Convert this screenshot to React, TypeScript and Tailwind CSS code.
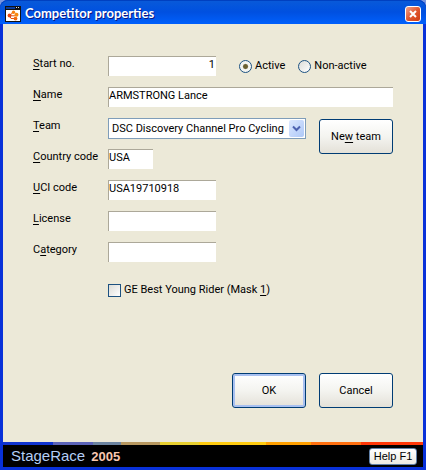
import type { ReactNode } from 'react';
import { useState } from 'react';

const BUTTON =
  'h-[35px] w-[74px] rounded-[3px] border border-[#003c74] bg-linear-to-b from-white via-[#f4f4f0] to-[#e4e1d8] pt-[2px] text-center';
const FIELD =
  'h-5 border-0 border-t border-l border-[#aca899] bg-white pb-1 leading-4 outline-none';

function Key({ children }: { children: ReactNode }) {
  return <span className="underline underline-offset-2">{children}</span>;
}

function Label({ id, children }: { id: string; children: ReactNode }) {
  return (
    <label htmlFor={id} className="col-start-1 leading-4 whitespace-nowrap">
      {children}
    </label>
  );
}

function AppIcon() {
  return (
    <svg width="16" height="16" viewBox="0 0 16 16" aria-hidden="true">
      <rect width="16" height="16" fill="#111" />
      <rect x="1" y="1" width="9" height="2" fill="#0a3a98" />
      <path d="M11 1h1v1h-1zM13 1h1v1h-1z" fill="#ddd" />
      <rect x="1" y="4" width="14" height="11" fill="#fff" />
      <path d="M8 6.5 4.5 9.5 6 12.5h4M5 9.8h5" stroke="#e05010" fill="none" />
      <circle cx="8.5" cy="6.3" r="1.7" fill="#f88010" />
      <circle cx="4.5" cy="9.5" r="1.9" fill="#e84810" />
      <circle cx="11.5" cy="8.8" r="2" fill="#f88a10" />
      <circle cx="10.5" cy="12.6" r="1.9" fill="#f06810" />
    </svg>
  );
}

function Radio({ label, checked, onChange }: { label: string; checked: boolean; onChange: () => void }) {
  return (
    <label className="flex items-center gap-[3px] whitespace-nowrap">
      <input
        type="radio"
        name="status"
        checked={checked}
        onChange={onChange}
        className="size-[13px] appearance-none rounded-full border border-[#1c5180] bg-white bg-linear-to-br from-[#dcdcd7] to-white checked:bg-radial checked:from-[#6b5f30] checked:from-25% checked:to-[#f4f4f0] checked:to-40%"
      />
      {label}
    </label>
  );
}

export default function App() {
  const [active, setActive] = useState(true);
  return (
    <div className="flex min-h-screen flex-col bg-[#7a96df] font-['Roboto',sans-serif] text-[11px] text-black">
      <div className="flex grow flex-col rounded-t-lg bg-[#0831d9]">
        <header className="flex h-6 shrink-0 items-center rounded-t-lg bg-linear-to-b from-[#0a5ad8] via-[#0050e0] to-[#0060fc] px-[5px] pt-[3px] shadow-[inset_0_1px_0_#0040c0]">
          <AppIcon />
          <h1 className="grow pl-1 font-['Lato',sans-serif] text-[13px] font-bold whitespace-nowrap text-white [text-shadow:1px_1px_#0a1883]">
            Competitor properties
          </h1>
          <button
            type="button"
            aria-label="Close"
            className="flex size-4 items-center justify-center rounded-[3px] border border-white bg-linear-to-br from-[#f0a088] via-[#e05830] to-[#d03c10]"
          >
            <svg width="8" height="8" viewBox="0 0 8 8" aria-hidden="true">
              <path d="M1 1l6 6M7 1 1 7" stroke="#fff" strokeWidth="2" />
            </svg>
          </button>
        </header>

        <main className="mx-[3px] mb-[3px] flex grow flex-col bg-[#ece9d8]">
          <form className="flex grow flex-col" onSubmit={(e) => e.preventDefault()}>
            <div className="grid auto-rows-[31px] grid-cols-[75px_198px_1fr] items-start px-[30px] pt-8">
              <Label id="start"><Key>S</Key>tart no.</Label>
              <div className="col-span-2 flex items-center">
                <input id="start" defaultValue="1" className={`${FIELD} w-[108px] pr-px text-right`} />
                <div className="flex gap-[13px] pl-[23px]">
                  <Radio label="Active" checked={active} onChange={() => setActive(true)} />
                  <Radio label="Non-active" checked={!active} onChange={() => setActive(false)} />
                </div>
              </div>
              <Label id="name"><Key>N</Key>ame</Label>
              <input id="name" defaultValue="ARMSTRONG Lance" className={`${FIELD} col-span-2 w-full`} />
              <Label id="team"><Key>T</Key>eam</Label>
              <div className="relative">
                <select
                  id="team"
                  className="h-[21px] w-full appearance-none border border-[#7f9db9] bg-white pt-[2px] pl-[3px] outline-none"
                >
                  <option>DSC Discovery Channel Pro Cycling</option>
                </select>
                <span className="pointer-events-none absolute top-[2px] right-[2px] flex h-[17px] w-[15px] items-center justify-center rounded-[2px] bg-linear-to-br from-[#dce8ff] to-[#aec8f7]">
                  <svg width="9" height="7" viewBox="0 0 9 7" aria-hidden="true">
                    <path d="m1 1.5 3.5 3.5L8 1.5" stroke="#4d62b0" strokeWidth="2" fill="none" />
                  </svg>
                </span>
              </div>
              <button type="button" className={`${BUTTON} row-span-2 mt-px justify-self-end`}>
                Ne<Key>w</Key> team
              </button>
              <Label id="country"><Key>C</Key>ountry code</Label>
              <input id="country" defaultValue="USA" className={`${FIELD} w-[45px]`} />
              <Label id="uci"><Key>U</Key>CI code</Label>
              <input id="uci" defaultValue="USA19710918" className={`${FIELD} w-[108px]`} />
              <Label id="license"><Key>L</Key>icense</Label>
              <input id="license" className={`${FIELD} col-start-2 w-[108px]`} />
              <Label id="category">C<Key>a</Key>tegory</Label>
              <input id="category" className={`${FIELD} col-start-2 w-[108px]`} />
              <label className="col-span-2 col-start-2 flex items-center gap-[3px] pt-[9px]">
                <input
                  type="checkbox"
                  className="size-[13px] appearance-none border border-[#1c5180] bg-linear-to-br from-[#dcdcd7] to-white checked:bg-[#21a121]"
                />
                <span>GE Best Young Rider (Mask <Key>1</Key>)</span>
              </label>
            </div>

            <div className="mt-auto flex justify-end gap-[13px] px-[30px] pb-[34px]">
              <button type="submit" className={`${BUTTON} shadow-[inset_0_0_0_2px_#a8c0f0]`}>
                OK
              </button>
              <button type="button" className={BUTTON}>Cancel</button>
            </div>
          </form>

          <footer>
            <div className="grid h-[3px] grid-cols-[50fr_40fr_28fr_39fr_39fr_67fr_45fr_50fr_62fr]">
              <span className="bg-[#1034d0]" />
              <span className="bg-[#5c64b8]" />
              <span className="bg-[#6c84a0]" />
              <span className="bg-[#b89860]" />
              <span className="bg-[#e8d030]" />
              <span className="bg-[#ffcc10]" />
              <span className="bg-[#ffa000]" />
              <span className="bg-[#ff7010]" />
              <span className="bg-[#ff3808]" />
            </div>
            <div className="flex h-[22px] items-center justify-between bg-black pr-[6px] pl-2 font-['Liberation_Sans',sans-serif]">
              <div className="flex items-baseline gap-[6px] leading-5 whitespace-nowrap">
                <span className="text-[15px] text-[#b4cef4]">StageRace</span>
                <span className="text-[13px] font-bold text-[#f8c8b0]">2005</span>
              </div>
              <button
                type="button"
                className="h-[17px] w-12 rounded-[3px] border border-[#6080a8] bg-linear-to-b from-white to-[#eceae2] text-[11px] leading-[15px] whitespace-nowrap"
              >
                Help F1
              </button>
            </div>
          </footer>
        </main>
      </div>
    </div>
  );
}
